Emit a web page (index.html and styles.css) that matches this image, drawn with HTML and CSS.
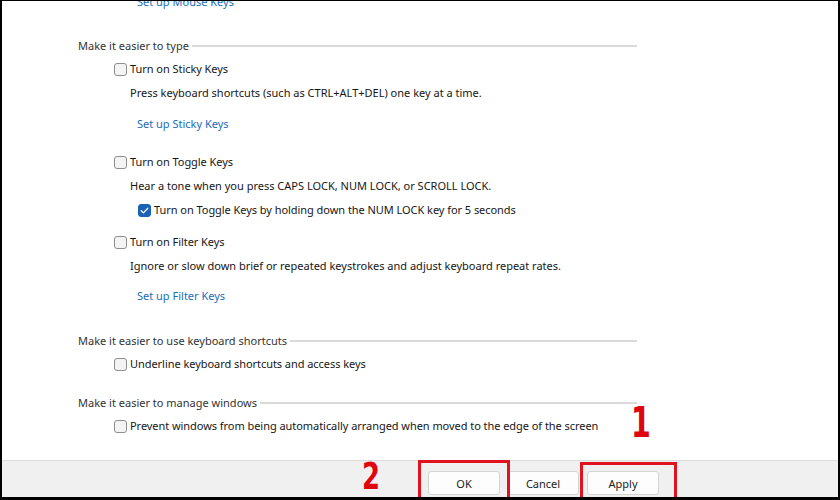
FILE: index.html
```html
<!DOCTYPE html>
<html lang="en">
<head>
  <meta charset="UTF-8" />
  <title>Make the keyboard easier to use</title>
  <link rel="stylesheet" href="styles.css">
</head>
<body>

  <div class="window">
    <div class="content">
      <a class="link first">Set up Mouse Keys</a>

      <div class="group-title">Make it easier to type</div>
      <label class="option"><span class="box"></span>Turn on Sticky Keys</label>
      <p class="desc">Press keyboard shortcuts (such as CTRL+ALT+DEL) one key at a time.</p>
      <a class="link">Set up Sticky Keys</a>

      <label class="option after-link"><span class="box"></span>Turn on Toggle Keys</label>
      <p class="desc">Hear a tone when you press CAPS LOCK, NUM LOCK, or SCROLL LOCK.</p>
      <label class="option sub"><span class="box checked"></span>Turn on Toggle Keys by holding down the NUM LOCK key for 5 seconds</label>

      <label class="option after-sub"><span class="box"></span>Turn on Filter Keys</label>
      <p class="desc">Ignore or slow down brief or repeated keystrokes and adjust keyboard repeat rates.</p>
      <a class="link last">Set up Filter Keys</a>

      <div class="group-title wide">Make it easier to use keyboard shortcuts</div>
      <label class="option"><span class="box"></span>Underline keyboard shortcuts and access keys</label>

      <div class="group-title near">Make it easier to manage windows</div>
      <label class="option"><span class="box"></span>Prevent windows from being automatically arranged when moved to the edge of the screen</label>
    </div>

    <div class="footer">
      <button>OK</button>
      <button>Cancel</button>
      <button>Apply</button>
    </div>

    <div class="mark mark-ok"></div>
    <div class="mark mark-apply"></div>
    <span class="step step-2">2</span>
    <span class="step step-1">1</span>
  </div>

</body>
</html>
```

FILE: styles.css
```css
body {
  margin: 0;
  font-family: "Noto Sans", "Open Sans", sans-serif;
  font-size: 11px;
  color: #161616;
  background: #fff;
}

.window {
  position: relative;
  box-sizing: border-box;
  width: 840px;
  height: 500px;
  border-style: solid;
  border-color: #000;
  border-width: 1px 2px 3px 2px;
  overflow: hidden;
  display: flex;
  flex-direction: column;
}

.content {
  height: 459px;
  overflow: hidden;
  padding: 0 201px 0 76px;
  background: #fff;
}

.link {
  display: block;
  margin-top: 15px;
  padding-left: 59px;
  line-height: 16px;
  color: #1a6db8;
  cursor: pointer;
}

.link.first {
  margin-top: -7px;
}

.link.last {
  margin-top: 14px;
}

.group-title {
  display: flex;
  align-items: center;
  margin-top: 28px;
  line-height: 16px;
  color: #333;
}

.group-title::after {
  content: "";
  flex: 1;
  height: 2px;
  margin-left: 3px;
  background: #dadada;
}

.group-title.wide {
  margin-top: 29px;
}

.group-title.near {
  margin-top: 23px;
}

.option {
  display: flex;
  align-items: center;
  margin-top: 7px;
  padding-left: 36px;
  line-height: 16px;
  letter-spacing: -0.05px;
}

.option.after-link {
  margin-top: 22px;
}

.option.sub {
  margin-top: 8px;
  padding-left: 60px;
}

.option.after-sub {
  margin-top: 16px;
}

.box {
  box-sizing: border-box;
  width: 13px;
  height: 13px;
  margin-right: 3px;
  border: 1px solid #8d8d8d;
  border-radius: 3px;
  background: #f4f4f4;
  flex-shrink: 0;
}

.box.checked {
  border-color: #1a62b4;
  background: #1a62b4 url("data:image/svg+xml,%3Csvg xmlns='http://www.w3.org/2000/svg' viewBox='0 0 13 13'%3E%3Cpath d='M3.2 6.8l2.2 2.1 4.4-4.6' fill='none' stroke='%23fff' stroke-width='1.3' stroke-linecap='round' stroke-linejoin='round'/%3E%3C/svg%3E") center / 13px 13px no-repeat;
}

.desc {
  margin: 8px 0 0;
  padding-left: 52px;
  line-height: 16px;
}

.footer {
  flex: 1;
  display: flex;
  gap: 7px;
  padding: 10px 0 0 426px;
  border-top: 1px solid #dcdcdc;
  background: #f0f0f0;
}

.footer button {
  width: 72px;
  height: 24px;
  padding: 0;
  font-family: inherit;
  font-size: 11px;
  color: #1b1b1b;
  background: #fdfdfd;
  border: 1px solid #d4d4d4;
  border-radius: 3px;
}

.footer button:last-child {
  margin-left: 1px;
}

/* red annotation marks over the dialog */
.mark {
  position: absolute;
  box-sizing: border-box;
  border: 3px solid #e0141e;
}

.mark-ok {
  left: 416px;
  top: 459px;
  width: 92px;
  height: 40px;
}

.mark-apply {
  left: 578px;
  top: 461px;
  width: 97px;
  height: 38px;
}

.step {
  position: absolute;
  font-family: "DejaVu Sans", sans-serif;
  font-weight: bold;
  color: #e0060f;
  line-height: 1;
  transform-origin: left top;
  transform: scaleX(0.68);
}

.step-1 {
  left: 629px;
  top: 401px;
  font-size: 42px;
}

.step-2 {
  left: 360px;
  top: 456px;
  font-size: 38px;
}
```
